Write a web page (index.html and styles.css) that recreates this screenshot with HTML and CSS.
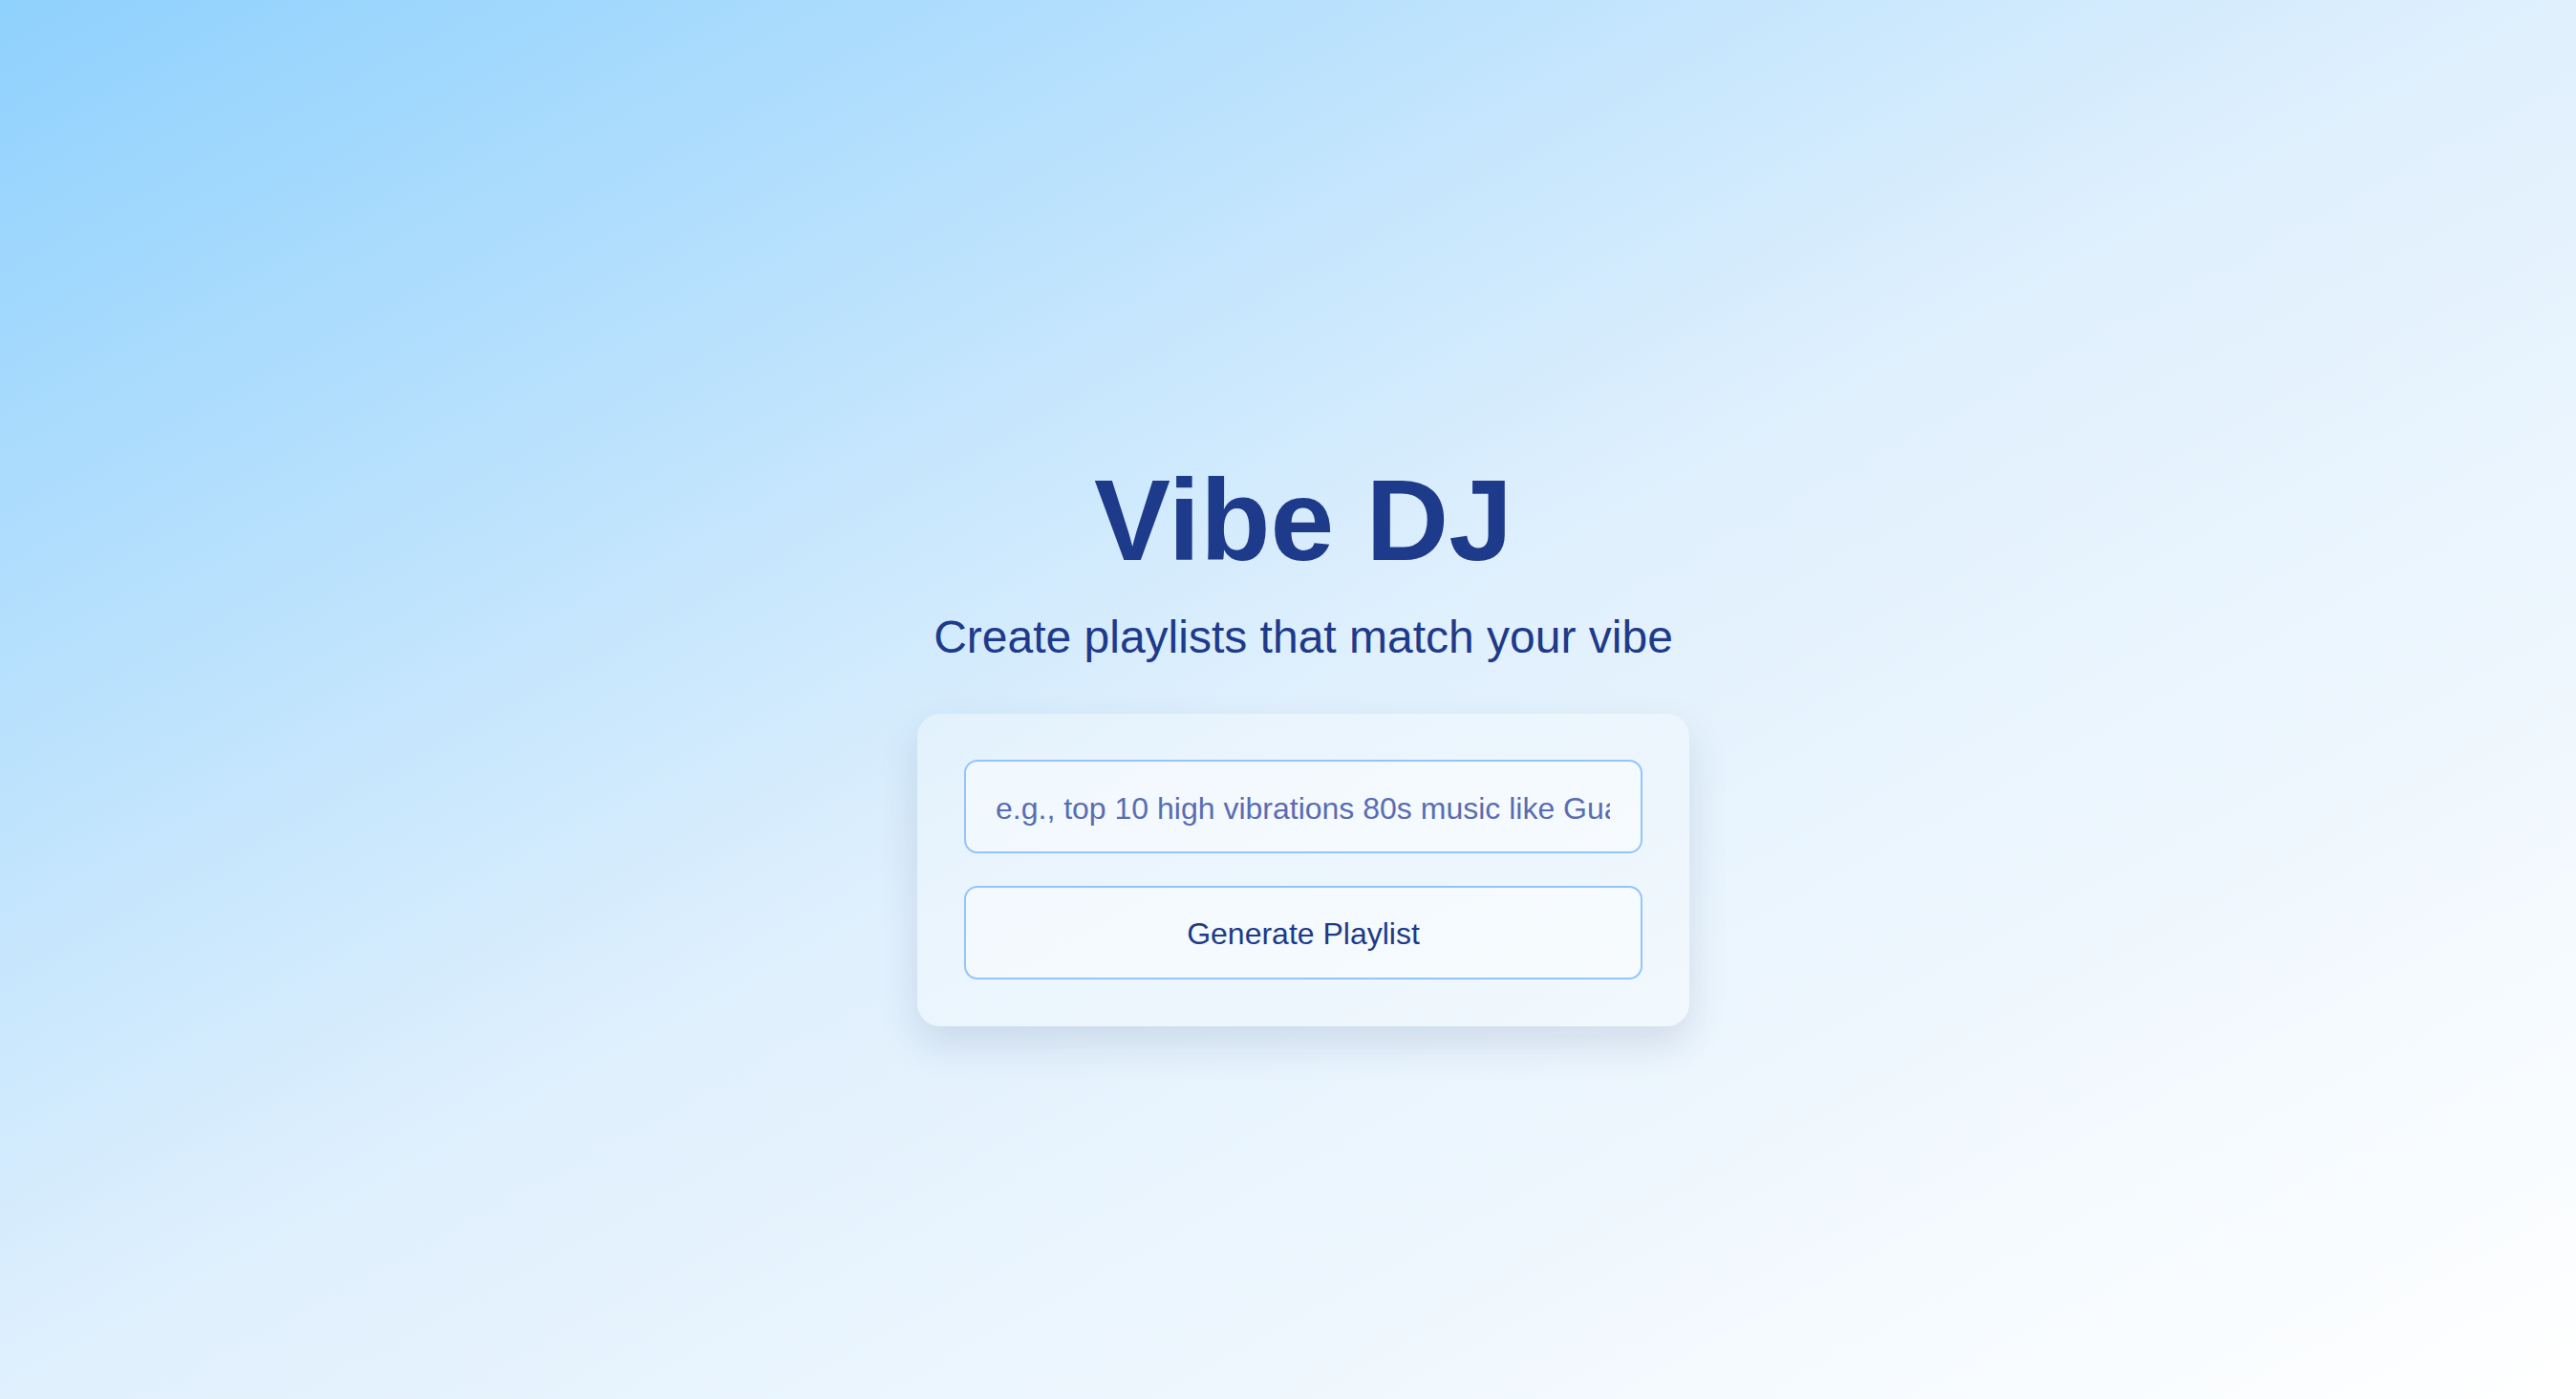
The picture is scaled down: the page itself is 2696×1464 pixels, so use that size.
FILE: index.html
```html
<!DOCTYPE html>
<html lang="en">
<head>
<meta charset="utf-8">
<title>Vibe DJ</title>
<link rel="stylesheet" href="styles.css">
</head>
<body>
<main class="page">
  <h1 class="title">Vibe DJ</h1>
  <p class="subtitle">Create playlists that match your vibe</p>
  <form class="card">
    <input class="prompt" type="text" placeholder="e.g., top 10 high vibrations 80s music like Guardians of the Galaxy">
    <button class="generate" type="button">Generate Playlist</button>
  </form>
</main>
</body>
</html>
```

FILE: styles.css
```css
* {
  box-sizing: border-box;
}

html, body {
  margin: 0;
  height: 100%;
}

body {
  font-family: "Liberation Sans", Arial, sans-serif;
  background: linear-gradient(to bottom right, #8fd1fd 0%, #e0f0fd 50%, #ffffff 100%);
  background-attachment: fixed;
  color: #1e3a8a;
  overflow: hidden;
}

.page {
  min-height: 100%;
  display: flex;
  flex-direction: column;
  align-items: center;
  padding: 472px 0 0 32px;
}

.title {
  margin: 0;
  font-size: 120px;
  line-height: 1.2;
  font-weight: 700;
  color: #1e3a8a;
}

.subtitle {
  margin: 22px 0 0;
  font-size: 48px;
  line-height: 1.2;
  color: #1e3a8a;
}

.card {
  margin-top: 51px;
  width: 808px;
  padding: 48px 49px 49px;
  display: flex;
  flex-direction: column;
  gap: 34px;
  border-radius: 24px;
  background: rgba(255, 255, 255, 0.3);
  box-shadow: 0 18px 42px rgba(40, 62, 110, 0.14);
}

.prompt,
.generate {
  width: 100%;
  height: 98px;
  border: 2px solid #93c5fd;
  border-radius: 14px;
  background: rgba(255, 255, 255, 0.45);
  font-family: "Liberation Sans", Arial, sans-serif;
  font-size: 32px;
  color: #1e3a8a;
  outline: none;
}

.prompt {
  padding: 5px 32px 0 31px;
}

.prompt::placeholder {
  color: #5a6db3;
  opacity: 1;
}

.generate {
  padding: 4px 0 0;
  cursor: pointer;
}
```
